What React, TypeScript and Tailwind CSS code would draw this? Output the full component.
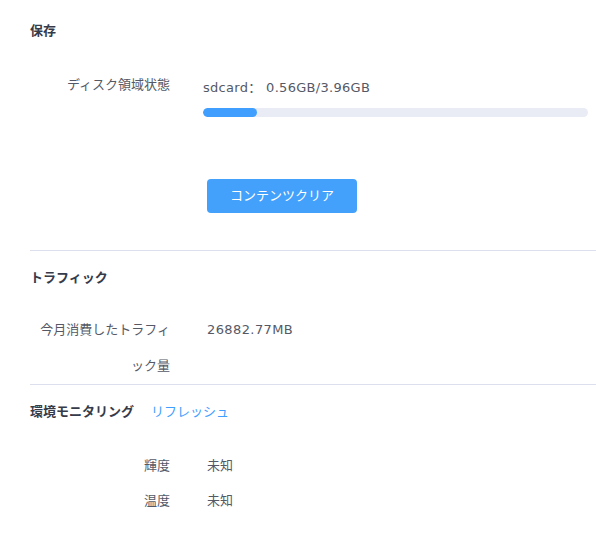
import React from "react";

const font = { fontFamily: '"DejaVu Sans", "Noto Sans CJK JP", sans-serif' };
const sc = { fontFamily: '"Noto Sans CJK SC", sans-serif' };

function Divider() {
  return <div className="h-px bg-[#dcdfee]" />;
}

export default function App() {
  return (
    <div
      className="w-[596px] h-[538px] bg-white pl-[30px] text-[13px] text-[#555966] overflow-hidden"
      style={font}
    >
      {/* 保存 */}
      <div className="pt-[21px] h-[41px] leading-[20px] font-bold text-[#363b4a]">保存</div>
      <div className="flex mt-[26px]">
        <div className="w-[140px] shrink-0 text-right leading-[36px]">ディスク領域状態</div>
        <div className="flex-1 pl-[33px] pr-[8px]">
          <div className="leading-[36px] pt-[2px] h-[38px] tracking-[0.3px]">
            sdcard<span style={sc}>：</span> 0.56GB/3.96GB
          </div>
          <div className="mt-[3px] h-[9px] rounded-full bg-[#e9ecf4] overflow-hidden">
            <div className="h-full rounded-full bg-[#409eff]" style={{ width: "14.1%" }} />
          </div>
          <button className="mt-[62px] ml-[4px] w-[150px] h-[34px] rounded-[4px] bg-[#43a0fb] text-white text-[13px] leading-[34px]">
            コンテンツクリア
          </button>
        </div>
      </div>
      <div className="mt-[37px]">
        <Divider />
      </div>

      {/* トラフィック */}
      <div className="mt-[17px] h-[20px] leading-[20px] font-bold text-[#363b4a]">トラフィック</div>
      <div className="flex mt-[24px]">
        <div className="w-[140px] shrink-0 text-right leading-[36px]">今月消費したトラフィック量</div>
        <div className="pl-[37px] leading-[36px] tracking-[0.4px]">26882.77MB</div>
      </div>
      <Divider />

      {/* 環境モニタリング */}
      <div className="mt-[17px] h-[20px] leading-[20px] flex items-center">
        <span className="font-bold text-[#363b4a]">環境モニタリング</span>
        <span className="ml-[17px] text-[#409eff] cursor-pointer">リフレッシュ</span>
      </div>
      <div className="mt-[26px] flex flex-col">
        <div className="flex h-[35px] leading-[36px]">
          <div className="w-[140px] shrink-0 text-right">輝度</div>
          <div className="pl-[37px]">未知</div>
        </div>
        <div className="flex h-[35px] leading-[36px]">
          <div className="w-[140px] shrink-0 text-right">温度</div>
          <div className="pl-[37px]">未知</div>
        </div>
      </div>
    </div>
  );
}
